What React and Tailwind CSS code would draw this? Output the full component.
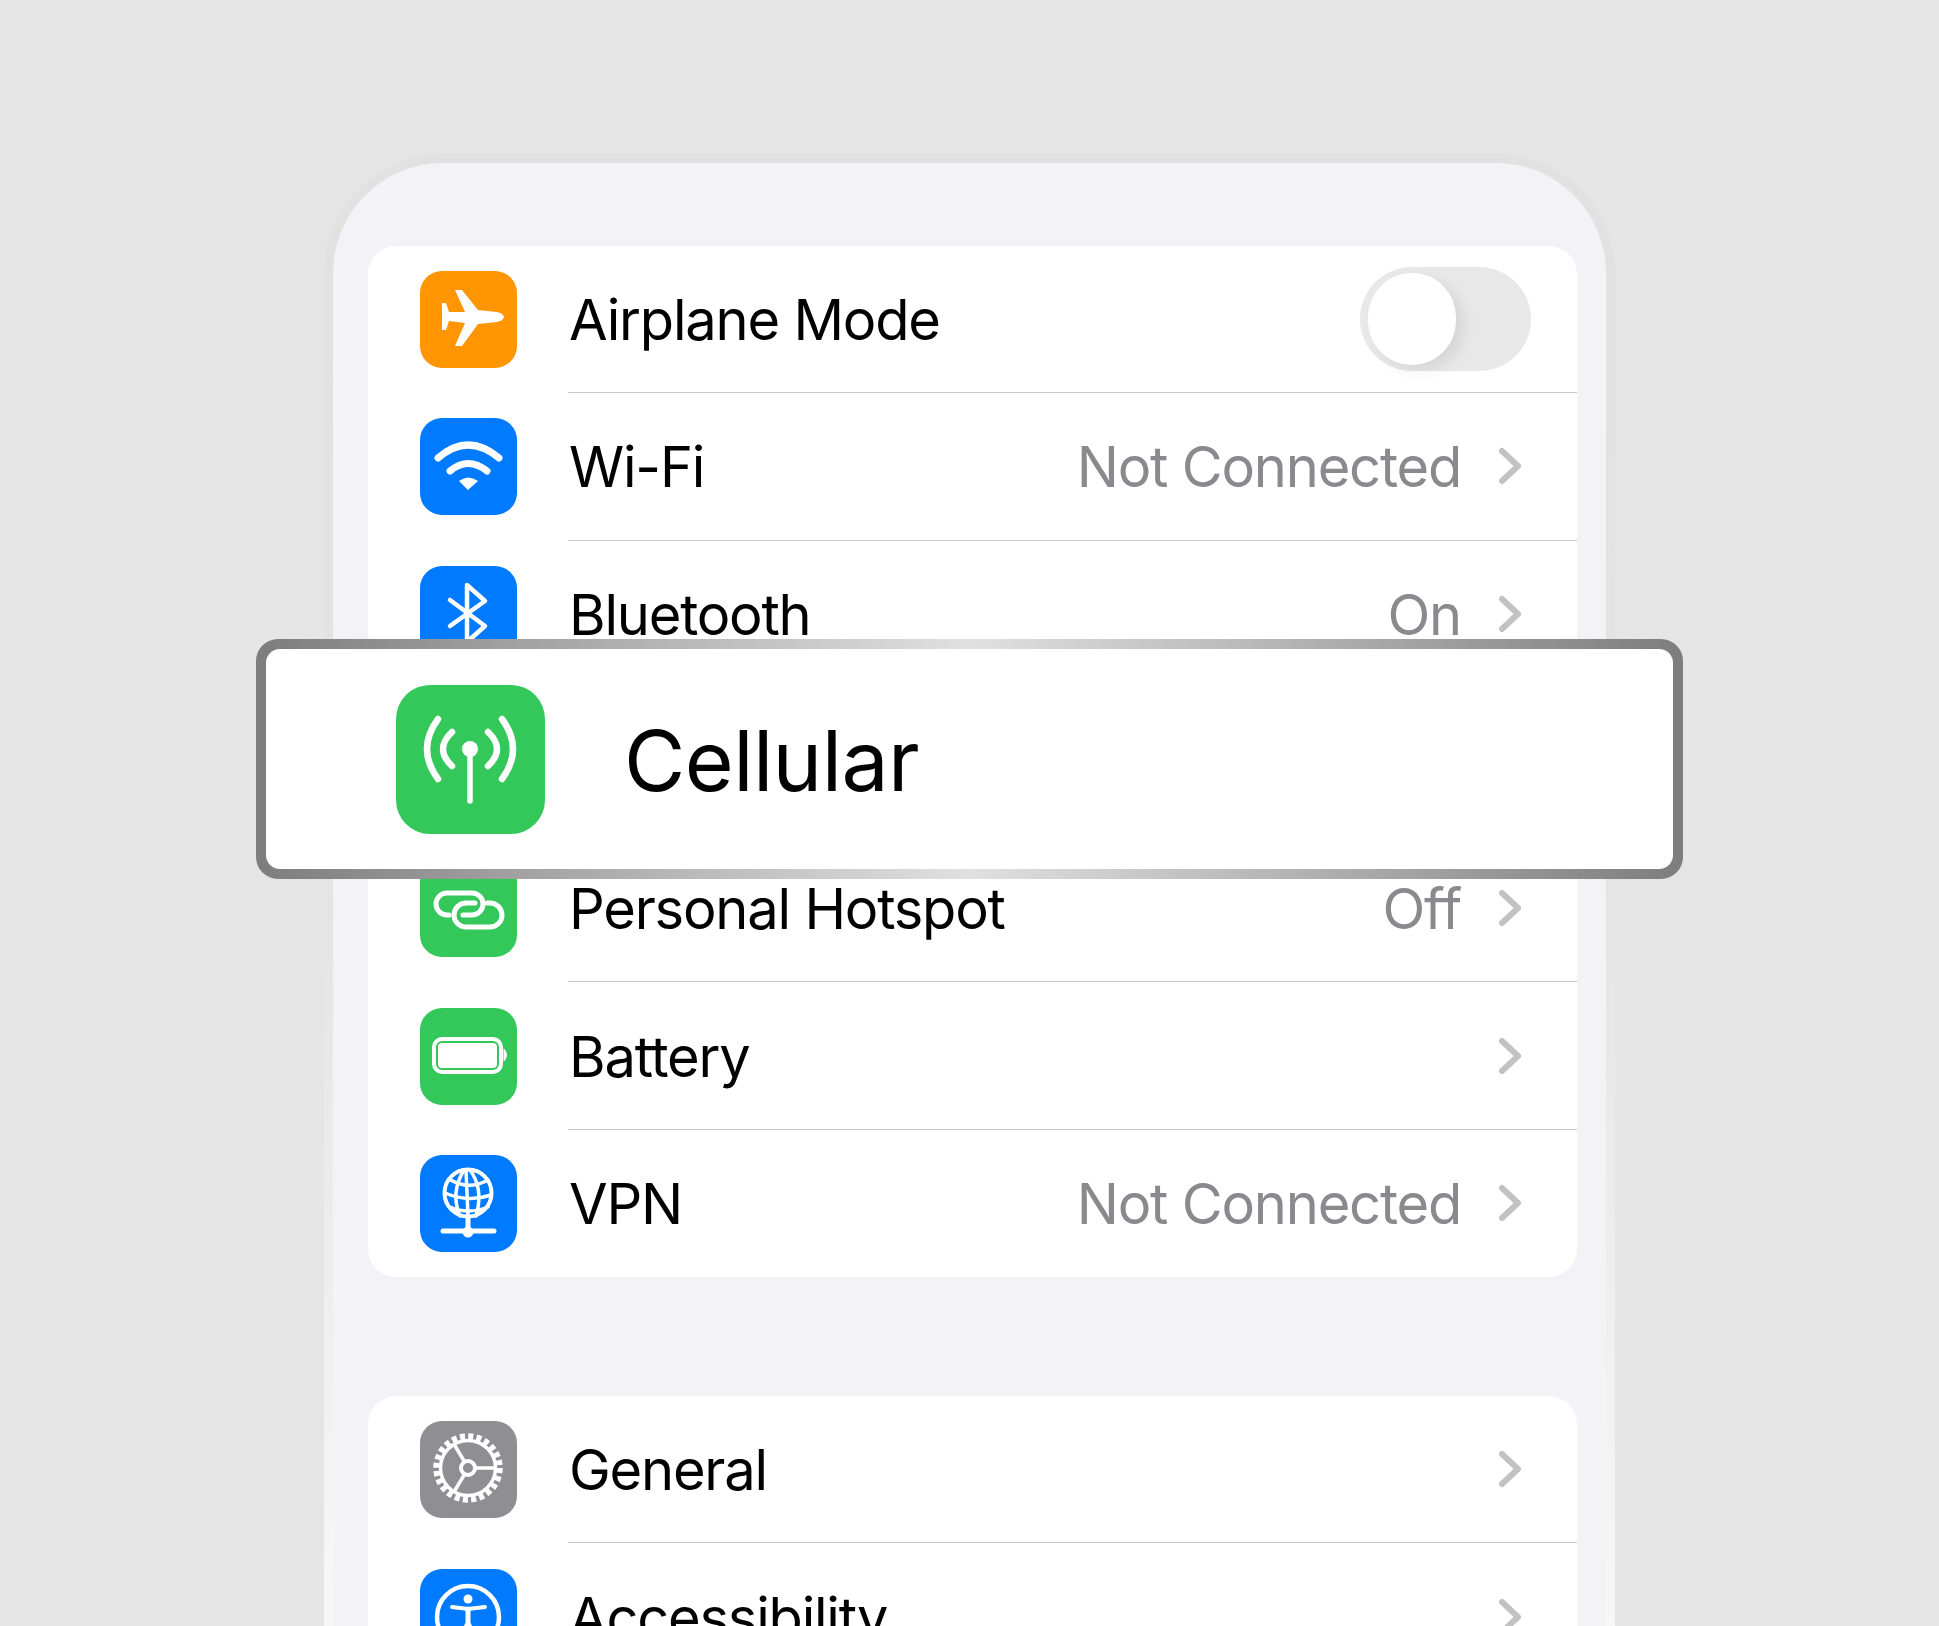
const F = "font-['Inter','Liberation_Sans',sans-serif]";

const Plane = () => (
  <svg viewBox="0 0 97 97" className="w-full h-full">
    <path fill="#fff" d="M35 19 L42 19 L58 39 L77 41 Q83 42 84 46 Q83 50 77 51 L58 53 L42 75 L35 75 L45 52 L29 50 L26 59 L22 59 L22 32 L26 32 L29 41 L45 41 Z" />
  </svg>
);
const Wifi = () => (
  <svg viewBox="0 0 97 97" className="w-full h-full" fill="none" stroke="#fff" strokeWidth="7" strokeLinecap="round">
    <path d="M18 40 Q48 14 79 40" />
    <path d="M30 53 Q48 38 67 53" />
    <path fill="#fff" stroke="none" d="M39 63 Q48 56 58 63 L48 72 Z" />
  </svg>
);
const Bluetooth = () => (
  <svg viewBox="0 0 97 97" className="w-full h-full" fill="none" stroke="#fff" strokeWidth="4.5" strokeLinecap="round" strokeLinejoin="round">
    <path d="M30 34 L65 60 L47 76 L47 19 L65 35 L30 60" />
  </svg>
);
const Antenna = () => (
  <svg viewBox="0 0 149 149" className="w-full h-full" fill="none" stroke="#fff" strokeWidth="6.5" strokeLinecap="round">
    <circle cx="74" cy="64" r="8" fill="#fff" stroke="none" />
    <path d="M74 64 V116" strokeWidth="5.5" />
    <path d="M56 47 Q38 64 56 81" />
    <path d="M92 47 Q110 64 92 81" />
    <path d="M42 34 Q20 64 42 94" />
    <path d="M106 34 Q128 64 106 94" />
  </svg>
);
const Link = () => (
  <svg viewBox="0 0 97 97" className="w-full h-full" fill="none" stroke="#fff" strokeWidth="5" strokeLinecap="round">
    <path d="M29 55 H27 A11 11 0 0 1 27 33 H52 A11 11 0 0 1 52 55 H43" />
    <path d="M67 43 H70 A12 12 0 0 1 70 67 H46 A12 12 0 0 1 46 43 H55" />
  </svg>
);
const Battery = () => (
  <svg viewBox="0 0 97 97" className="w-full h-full">
    <rect x="14" y="31" width="67" height="33" rx="8" fill="none" stroke="#fff" strokeWidth="4" />
    <rect x="18" y="35" width="59" height="25" rx="4" fill="#fff" />
    <path d="M84 41 Q89 47 84 53 Z" fill="#fff" stroke="#fff" strokeWidth="1" />
  </svg>
);
const Globe = () => (
  <svg viewBox="0 0 97 97" className="w-full h-full" fill="none" stroke="#fff" strokeWidth="3.5" strokeLinecap="round">
    <circle cx="48" cy="38" r="23.5" strokeWidth="4" />
    <path d="M44 15 Q30 38 40 61" />
    <path d="M50 15 Q64 34 56 61" />
    <path d="M46 15 Q47 38 48 61" />
    <path d="M29 24 Q48 36 68 25" />
    <path d="M25 38 Q48 48 71 40" />
    <path d="M30 52 Q48 60 68 52" />
    <path d="M48 62 V76" strokeWidth="5" />
    <path d="M23 76 H74" strokeWidth="5" />
    <circle cx="48" cy="77" r="5.5" fill="#fff" stroke="none" />
  </svg>
);
const Gear = () => (
  <svg viewBox="0 0 97 97" className="w-full h-full" fill="none" stroke="#fff" strokeLinecap="butt">
    <circle cx="48" cy="47" r="31.5" strokeWidth="6.5" strokeDasharray="5 3.247" />
    <circle cx="48" cy="47" r="27.5" strokeWidth="3.5" />
    <circle cx="48" cy="47" r="7" strokeWidth="4" />
    <path d="M54 47 H76" strokeWidth="3.5" />
    <path d="M45 41.5 L34.5 24" strokeWidth="3.5" />
    <path d="M45 52.5 L34.5 70" strokeWidth="3.5" />
  </svg>
);
const Access = () => (
  <svg viewBox="0 0 97 97" className="w-full h-full" fill="none" stroke="#fff">
    <circle cx="48" cy="48" r="31" strokeWidth="4.5" />
    <circle cx="48" cy="30" r="4.5" fill="#fff" stroke="none" />
    <path d="M32 38 L48 40 L65 38" strokeWidth="4" strokeLinecap="round" />
    <path d="M48 40 V54 M48 54 L40 72 M48 54 L56 72" strokeWidth="5" strokeLinecap="round" />
  </svg>
);
const Chevron = () => (
  <svg viewBox="0 0 24 38" className="h-[38px] w-6 shrink-0" fill="none" stroke="#c2c2c5" strokeWidth="6" strokeLinecap="round" strokeLinejoin="round">
    <path d="M4 4 L20 19 L4 34" />
  </svg>
);

function Row({ color, icon, label, value, last, toggle, hideChevron }) {
  return (
    <div className="flex h-[147.3px] items-stretch">
      <div className="flex w-[200px] shrink-0 items-center pl-[52px]">
        {icon && (
          <div className={`h-[97px] w-[97px] rounded-[22px] ${color}`}>{icon}</div>
        )}
      </div>
      <div className={`flex flex-1 items-center justify-between pr-[55px] ${last ? "" : "border-b border-[#c8c8c9]"}`}>
        {label && <span className="pl-[1px] pt-[2px] text-[56px] leading-none tracking-[-1.2px] text-black">{label}</span>}
        {toggle && (
          <div className="-mr-[9px] flex h-[104px] w-[171px] items-center rounded-[52px] bg-[#e8e8e9] pl-[8px]">
            <div className="h-[92px] w-[88px] rounded-full bg-white shadow-[8px_6px_14px_rgba(0,0,0,0.08)]" />
          </div>
        )}
        {!toggle && !hideChevron && (
          <div className="flex items-center gap-[37px]">
            {value && <span className="pt-[2px] text-[56px] leading-none tracking-[-1.2px] text-[#8a8a8e]">{value}</span>}
            <Chevron />
          </div>
        )}
      </div>
    </div>
  );
}

export default function App() {
  return (
    <div className={`relative h-[1626px] w-[1939px] overflow-hidden bg-[#e5e5e5] ${F}`}>
      <div className="mx-auto h-full w-[1291px] pt-[154px]">
        <div className="h-[1472px] rounded-t-[118px] bg-[linear-gradient(180deg,#e1e1e1_0%,#e4e4e4_50%,#f7f7f7_100%)] px-[9px] pt-[9px]">
          <div className="h-full rounded-t-[110px] bg-[#f2f2f7] pl-[35px] pr-[29px] pt-[83px]">
            <div className="overflow-hidden rounded-[28px] bg-white">
              <Row color="bg-[#ff9500]" icon={<Plane />} label="Airplane Mode" toggle />
              <Row color="bg-[#007aff]" icon={<Wifi />} label="Wi-Fi" value="Not Connected" />
              <Row color="bg-[#007aff]" icon={<Bluetooth />} label="Bluetooth" value="On" />
              <Row hideChevron />
              <Row color="bg-[#34c759]" icon={<Link />} label="Personal Hotspot" value="Off" />
              <Row color="bg-[#34c759]" icon={<Battery />} label="Battery" />
              <Row color="bg-[#007aff]" icon={<Globe />} label="VPN" value="Not Connected" last />
            </div>
            <div className="mt-[119px] rounded-[28px] bg-white">
              <Row color="bg-[#8e8e93]" icon={<Gear />} label="General" />
              <Row color="bg-[#007aff]" icon={<Access />} label="Accessibility" last />
            </div>
          </div>
        </div>
      </div>
      <div className="absolute left-[256px] top-[639px] h-[240px] w-[1427px] rounded-[22px] bg-[linear-gradient(90deg,#7d7d7d_0%,#e0e0e0_50%,#7d7d7d_100%)] p-[10px]">
        <div className="flex h-full items-center rounded-[14px] bg-white pl-[130px]">
          <div className="mt-[1px] h-[149px] w-[149px] rounded-[34px] bg-[#34c759]"><Antenna /></div>
          <span className="ml-[79px] pt-[3px] text-[84px] leading-none tracking-[-0.6px] text-black">Cellular</span>
        </div>
      </div>
    </div>
  );
}
